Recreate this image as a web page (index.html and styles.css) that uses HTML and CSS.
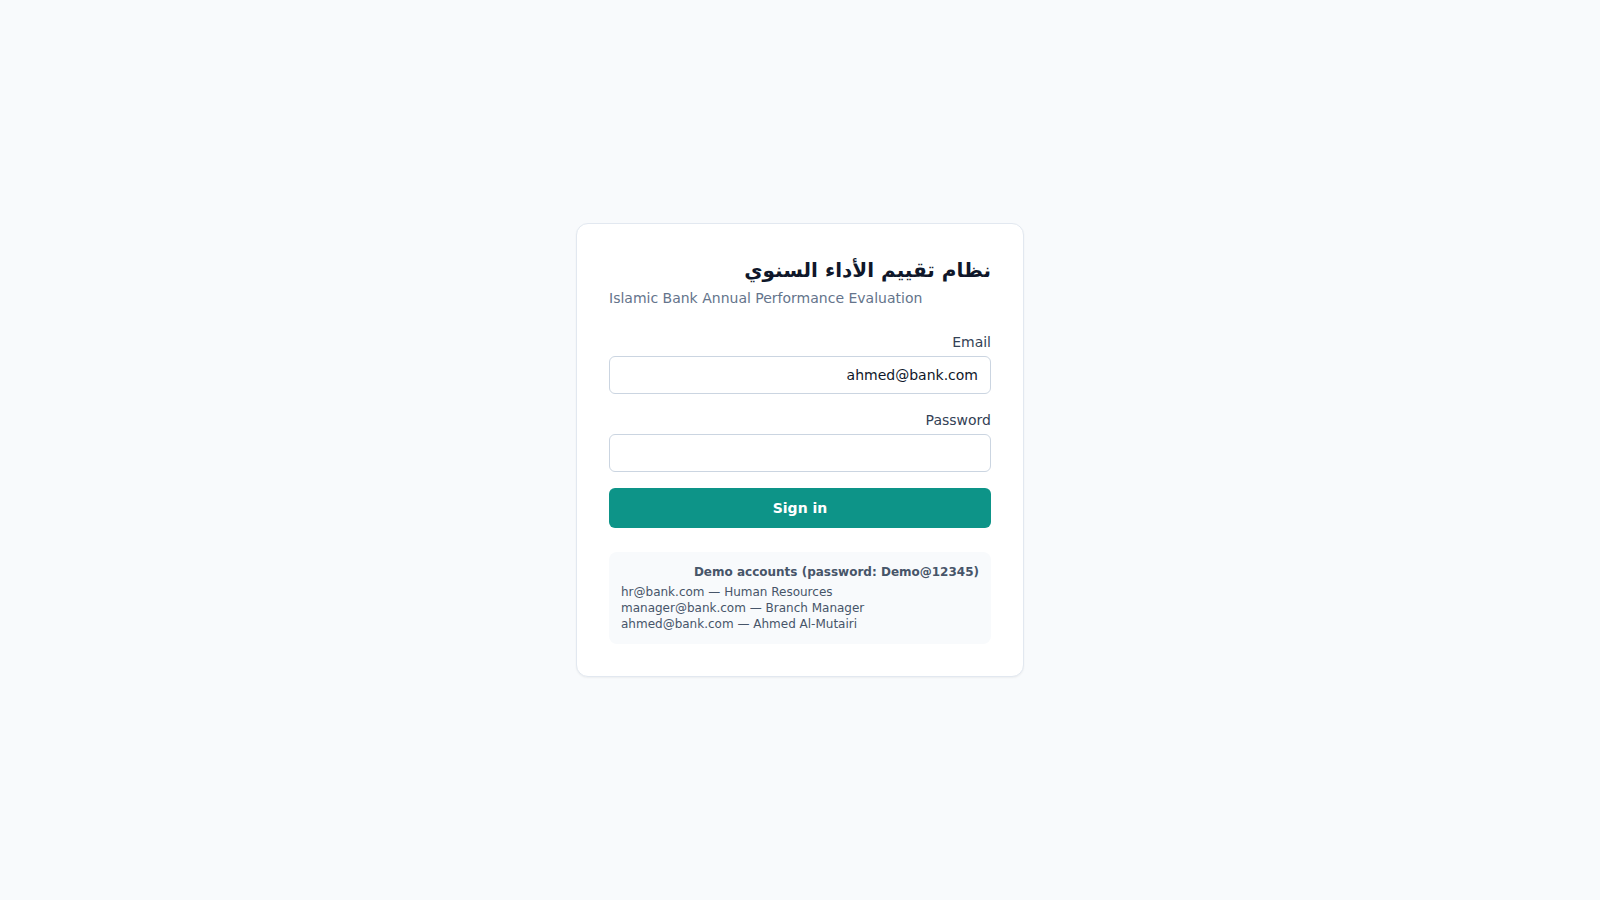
FILE: index.html
```html
<!DOCTYPE html>
<html lang="ar" dir="rtl">
<head>
<meta charset="utf-8">
<title>Login</title>
<link rel="stylesheet" href="styles.css">
</head>
<body>
<main class="page">
  <div class="card">
    <h1 class="title">نظام تقييم الأداء السنوي</h1>
    <p class="subtitle" dir="ltr">Islamic Bank Annual Performance Evaluation</p>
    <form class="form">
      <div class="field">
        <label class="label">Email</label>
        <input class="input" type="email" value="ahmed@bank.com">
      </div>
      <div class="field">
        <label class="label">Password</label>
        <input class="input" type="password" value="">
      </div>
      <button class="btn" type="button">Sign in</button>
    </form>
    <div class="demo">
      <div class="demo-title">Demo accounts (password: Demo@12345)</div>
      <div class="demo-list" dir="ltr">
        <div>hr@bank.com — Human Resources</div>
        <div>manager@bank.com — Branch Manager</div>
        <div>ahmed@bank.com — Ahmed Al-Mutairi</div>
      </div>
    </div>
  </div>
</main>
</body>
</html>
```
FILE: styles.css
```css
* { box-sizing: border-box; }
html, body { margin: 0; padding: 0; }
body {
  background: #f8fafc;
  font-family: "DejaVu Sans", sans-serif;
  color: #0f172a;
}
.page {
  min-height: 100vh;
  display: flex;
  align-items: center;
  justify-content: center;
  padding: 16px;
}
.card {
  width: 448px;
  background: #ffffff;
  border: 1px solid #e2e8f0;
  border-radius: 12px;
  box-shadow: 0 1px 2px rgba(0,0,0,0.05);
  padding: 32px;
}
.title {
  margin: 0;
  font-size: 20px;
  line-height: 28px;
  font-weight: 700;
  color: #0f172a;
}
.subtitle {
  margin: 4px 0 0;
  font-size: 14px;
  line-height: 20px;
  color: #64748b;
  text-align: left;
}
.form {
  margin-top: 24px;
  display: flex;
  flex-direction: column;
  gap: 16px;
}
.field { display: flex; flex-direction: column; }
.label {
  display: block;
  font-size: 14px;
  line-height: 20px;
  color: #334155;
  margin-bottom: 4px;
}
.input {
  width: 100%;
  height: 38px;
  border: 1px solid #cbd5e1;
  border-radius: 6px;
  padding: 8px 12px;
  font-family: inherit;
  font-size: 14px;
  line-height: 20px;
  color: #0f172a;
  background: #fff;
  outline: none;
}
.btn {
  width: 100%;
  height: 40px;
  border: none;
  border-radius: 6px;
  background: #0d9488;
  color: #fff;
  font-family: inherit;
  font-size: 14px;
  font-weight: 700;
  line-height: 20px;
}
.demo {
  margin-top: 24px;
  background: #f8fafc;
  border-radius: 8px;
  padding: 12px;
  font-size: 12px;
  line-height: 16px;
  color: #475569;
}
.demo-title { font-weight: 700; }
.demo-list { margin-top: 4px; text-align: left; }
```
